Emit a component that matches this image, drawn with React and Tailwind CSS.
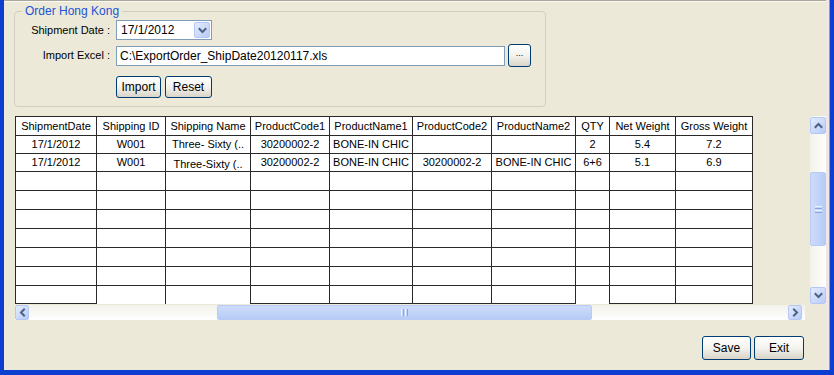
import React from 'react';

const columns = [
  { name: 'ShipmentDate', w: 81 },
  { name: 'Shipping ID', w: 69 },
  { name: 'Shipping Name', w: 85 },
  { name: 'ProductCode1', w: 79 },
  { name: 'ProductName1', w: 83 },
  { name: 'ProductCode2', w: 79 },
  { name: 'ProductName2', w: 84 },
  { name: 'QTY', w: 34 },
  { name: 'Net Weight', w: 66 },
  { name: 'Gross Weight', w: 77 },
];

const rows = [
  ['17/1/2012', 'W001', 'Three- Sixty (..', '30200002-2', 'BONE-IN CHIC', '', '', '2', '5.4', '7.2'],
  ['17/1/2012', 'W001', 'Three-Sixty (..', '30200002-2', 'BONE-IN CHIC', '30200002-2', 'BONE-IN CHIC', '6+6', '5.1', '6.9'],
  ...Array.from({ length: 7 }, () => Array(10).fill('')),
];

const rowHeights = [18, 18, 19, 19, 19, 19, 19, 19, 18];

// columns whose bottom line is missing on the last row in the original
const openBottom = [1, 2, 7];

const XpButton = ({ children, className = '' }) => (
  <button
    className={`flex items-center justify-center rounded-[3px] border border-[#003c74] bg-gradient-to-b from-[#ffffff] via-[#f4f3ee] to-[#d8d4c8] text-black ${className}`}
  >
    {children}
  </button>
);

const Chevron = ({ dir }) => {
  const paths = {
    up: 'M1.5 6 L4.5 3 L7.5 6',
    down: 'M1.5 3 L4.5 6 L7.5 3',
    left: 'M6 1.5 L3 4.5 L6 7.5',
    right: 'M3 1.5 L6 4.5 L3 7.5',
  };
  return (
    <svg width="9" height="9" viewBox="0 0 9 9">
      <path d={paths[dir]} fill="none" stroke="#4d6185" strokeWidth="2" strokeLinecap="square" />
    </svg>
  );
};

const ScrollButton = ({ dir, className = '' }) => (
  <div
    className={`flex items-center justify-center rounded-[2px] border border-[#b4c8f6] bg-gradient-to-br from-[#e4ecfd] to-[#b8cbf7] ${className}`}
  >
    <Chevron dir={dir} />
  </div>
);

const App = () => {
  return (
    <div className="box-border flex h-[375px] w-[834px] overflow-hidden border-b-[5px] border-l-[4px] border-r-[4px] border-[#0c3fd0] bg-[#ece9d8] font-['Liberation_Sans',Arial,sans-serif] text-[11px] text-black">
      <div className="flex flex-1 flex-col">
        <div className="h-[1px] bg-[#a9a79c]" />
        <div className="h-[1px] bg-[#fbfaf5]" />

        {/* Order group */}
        <fieldset className="ml-[10px] mt-[2px] box-border h-[103px] w-[532px] rounded-[4px] border border-[#d0cfbf] px-0">
          <legend className="ml-[7px] px-[3px] text-[12px] leading-[14px] text-[#1c54d6]">Order Hong Kong</legend>

          <div className="mt-[2px] flex h-[20px] items-center">
            <div className="w-[96px] pr-[1px] text-right text-[11px]">Shipment Date :</div>
            <div className="ml-[5px] flex h-[20px] w-[96px] items-center border border-[#7f9db9] bg-white">
              <span className="flex-1 pl-[4px] text-[12px]">17/1/2012</span>
              <ScrollButton dir="down" className="mr-[1px] h-[16px] w-[16px]" />
            </div>
          </div>

          <div className="mt-[4px] flex h-[23px] items-center">
            <div className="w-[96px] pr-[1px] text-right text-[11px]">Import Excel :</div>
            <div className="ml-[5px] flex h-[20px] w-[389px] items-center border border-[#7f9db9] bg-white pl-[3px] text-[12px]">
              C:\ExportOrder_ShipDate20120117.xls
            </div>
            <XpButton className="ml-[3px] h-[23px] w-[23px] pb-[4px] text-[9px] text-[#555]">...</XpButton>
          </div>

          <div className="ml-[101px] mt-[9px] flex gap-[4px]">
            <XpButton className="h-[22px] w-[45px] text-[12px]">Import</XpButton>
            <XpButton className="h-[22px] w-[47px] text-[12px]">Reset</XpButton>
          </div>
        </fieldset>

        {/* Grid area */}
        <div className="ml-[11px] mt-[9px] flex">
          <div className="w-[790px]">
            <div className="h-[188px] overflow-hidden">
              <table className="table-fixed border-collapse bg-white text-[11px] leading-[13px]">
                <colgroup>
                  {columns.map((c) => (
                    <col key={c.name} style={{ width: c.w }} />
                  ))}
                </colgroup>
                <thead>
                  <tr className="h-[19px]">
                    {columns.map((c) => (
                      <th key={c.name} className="border border-[#2a2a2a] p-0 text-center font-normal leading-[13px]">
                        {c.name}
                      </th>
                    ))}
                  </tr>
                </thead>
                <tbody>
                  {rows.map((r, i) => {
                    const last = i === rows.length - 1;
                    return (
                      <tr key={i} style={{ height: rowHeights[i] }}>
                        {r.map((v, j) => (
                          <td
                            key={j}
                            className={`overflow-hidden whitespace-nowrap border-l border-r border-t border-[#2a2a2a] p-0 text-center leading-[13px] ${
                              last && openBottom.includes(j) ? 'border-b-0' : 'border-b'
                            } ${i === 1 && j === 2 ? 'pt-[4px]' : ''}`}
                          >
                            {v}
                          </td>
                        ))}
                      </tr>
                    );
                  })}
                </tbody>
              </table>
            </div>

            {/* horizontal scrollbar */}
            <div className="mt-[1px] flex h-[15px] items-stretch bg-gradient-to-b from-[#f3f1ea] to-[#fefefe]">
              <ScrollButton dir="left" className="w-[14px]" />
              <div className="relative flex-1">
                <div className="absolute bottom-0 left-[188px] top-0 flex w-[375px] items-center justify-center rounded-[2px] border border-[#b7cbf5] bg-gradient-to-b from-[#cddcfb] to-[#b6cbf6]">
                  <div className="flex gap-[1px]">
                    <div className="h-[7px] w-[1px] bg-[#eef3fe]" />
                    <div className="h-[7px] w-[1px] bg-[#8ca6dc]" />
                    <div className="h-[7px] w-[1px] bg-[#eef3fe]" />
                    <div className="h-[7px] w-[1px] bg-[#8ca6dc]" />
                  </div>
                </div>
              </div>
              <ScrollButton dir="right" className="mr-[3px] w-[14px]" />
            </div>
          </div>

          {/* vertical scrollbar */}
          <div className="ml-[5px] flex h-[188px] w-[16px] flex-col bg-gradient-to-r from-[#f3f1ea] to-[#fefefe]">
            <ScrollButton dir="up" className="mt-[1px] h-[17px]" />
            <div className="relative flex-1">
              <div className="absolute left-0 right-0 top-[38px] flex h-[74px] flex-col items-center justify-center gap-[1px] rounded-[2px] border border-[#b7cbf5] bg-gradient-to-r from-[#cddcfb] to-[#b6cbf6]">
                <div className="h-[1px] w-[7px] bg-[#eef3fe]" />
                <div className="h-[1px] w-[7px] bg-[#8ca6dc]" />
                <div className="h-[1px] w-[7px] bg-[#eef3fe]" />
                <div className="h-[1px] w-[7px] bg-[#8ca6dc]" />
              </div>
            </div>
            <ScrollButton dir="down" className="h-[17px]" />
          </div>
        </div>

        {/* Footer buttons */}
        <div className="ml-[698px] mt-[16px] flex gap-[3px]">
          <XpButton className="h-[24px] w-[49px] text-[12px]">Save</XpButton>
          <XpButton className="h-[24px] w-[50px] text-[12px]">Exit</XpButton>
        </div>
      </div>
      <div className="w-[3px] bg-[#f1e6e4]" />
      <div className="w-[1px] bg-[#7d9be6]" />
    </div>
  );
};

export default App;
